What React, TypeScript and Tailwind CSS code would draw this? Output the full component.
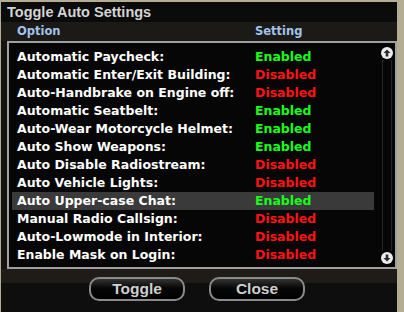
import React from "react";

const rows: { label: string; on: boolean }[] = [
  { label: "Automatic Paycheck:", on: true },
  { label: "Automatic Enter/Exit Building:", on: false },
  { label: "Auto-Handbrake on Engine off:", on: false },
  { label: "Automatic Seatbelt:", on: true },
  { label: "Auto-Wear Motorcycle Helmet:", on: true },
  { label: "Auto Show Weapons:", on: true },
  { label: "Auto Disable Radiostream:", on: false },
  { label: "Auto Vehicle Lights:", on: false },
  { label: "Auto Upper-case Chat:", on: true },
  { label: "Manual Radio Callsign:", on: false },
  { label: "Auto-Lowmode in Interior:", on: false },
  { label: "Enable Mask on Login:", on: false },
];

const font = { fontFamily: '"DejaVu Sans", Verdana, sans-serif' };
const arial = { fontFamily: '"Liberation Sans", Arial, sans-serif' };

const Arrow = ({ down }: { down?: boolean }) => (
  <div className="w-[12px] h-[12px] rounded-full bg-[#ececec] flex items-center justify-center">
    <svg width="8" height="8" viewBox="0 0 8 8" className={down ? "rotate-180" : ""}>
      <path d="M4 0.5 L7.5 4 L5.3 4 L5.3 7.5 L2.7 7.5 L2.7 4 L0.5 4 Z" fill="#2a2a2a" />
    </svg>
  </div>
);

const Button = ({ children }: { children: React.ReactNode }) => (
  <button
    className="w-[96px] h-[24px] rounded-[10px] border-2 border-[#8a8a8a] bg-[linear-gradient(to_bottom,#333333,#070707_45%,#000000)] text-[#cfcfcf] text-[15.5px] font-bold leading-none flex items-center justify-center"
    style={arial}
  >
    {children}
  </button>
);

export default function App() {
  return (
    <div className="w-[404px] h-[312px] bg-[#b5ad93] overflow-hidden" style={font}>
      <div className="ml-[1px] mt-[2px] w-[396px] h-[310px] flex flex-col bg-[#141311]">
        <div className="h-[20px] bg-[#0b0b0b] pl-[6px] flex items-center">
          <span className="text-[#d4d4d4] text-[14.5px] font-bold leading-none" style={arial}>
            Toggle Auto Settings
          </span>
        </div>
        <div className="h-[19px] bg-[#1c1a16] flex items-center text-[11.5px] font-bold text-[#a3c2ea] leading-none">
          <span className="pl-[16px] w-[254px]">Option</span>
          <span>Setting</span>
        </div>
        <div className="ml-[6px] w-[390px] h-[228px] border-2 border-[#a0a0a0] bg-[#060606] flex">
          <div className="flex-1 pt-[5px] pl-[3px]">
            {rows.map((r, i) => (
              <div
                key={r.label}
                className={`h-[18px] w-[362px] flex items-center text-[12.5px] font-bold leading-none ${
                  i === 8 ? "bg-[#3a3a3a]" : ""
                }`}
              >
                <span className="pl-[5px] w-[243px] text-white whitespace-nowrap">{r.label}</span>
                <span className={r.on ? "text-[#18ff18]" : "text-[#ff1212]"}>
                  {r.on ? "Enabled" : "Disabled"}
                </span>
              </div>
            ))}
          </div>
          <div className="w-[15px] flex flex-col items-center justify-between pt-[4px] pb-[3px] pr-[1px]">
            <Arrow />
            <div className="flex-1 w-[10px] border-x border-[#262626] my-[1px]" />
            <Arrow down />
          </div>
        </div>
        <div className="flex-1 bg-[linear-gradient(to_bottom,#1f1c17_0px,#1f1c17_14px,#0e0e0e_14px)] flex justify-center gap-[24px] pt-[8px] pr-[4px]">
          <Button>Toggle</Button>
          <Button>Close</Button>
        </div>
      </div>
    </div>
  );
}
